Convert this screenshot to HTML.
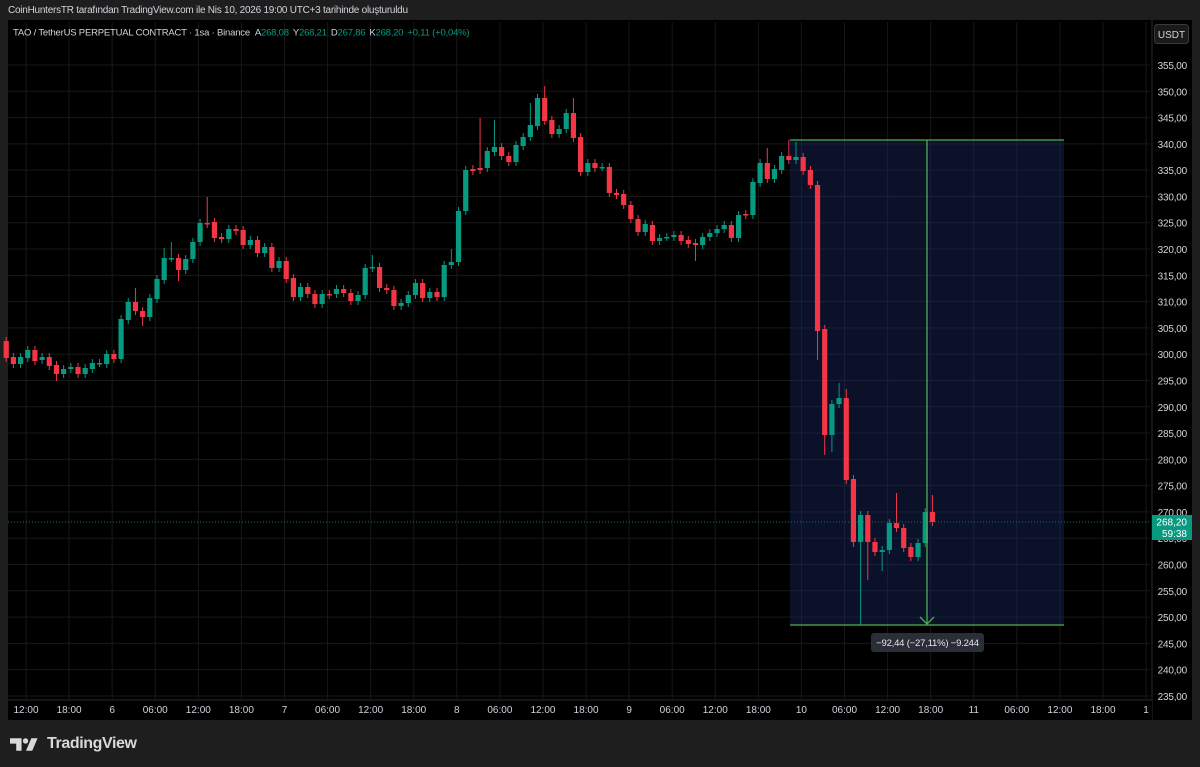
<!DOCTYPE html>
<html><head><meta charset="utf-8"><style>
html,body{margin:0;padding:0;background:#1e1e1e;width:1200px;height:767px;overflow:hidden;font-family:"Liberation Sans",sans-serif}
#hdr{position:absolute;left:8px;top:5px;font-size:10px;color:#d1d4dc;letter-spacing:-0.25px}
#chart{position:absolute;left:0;top:0}
#logo{position:absolute;left:10px;top:735px;color:#d9d9d9;font-size:16px;font-weight:bold;display:flex;align-items:center;gap:5px;letter-spacing:-0.4px}
</style></head><body>
<svg id="chart" width="1200" height="767" xmlns="http://www.w3.org/2000/svg" font-family="Liberation Sans, sans-serif"></svg>
<div id="hdr">CoinHuntersTR tarafından TradingView.com ile Nis 10, 2026 19:00 UTC+3 tarihinde oluşturuldu</div>
<div id="logo"><svg width="32" height="13" viewBox="0 0 36 14"><path d="M0 0h13v14h-6V6H0z" fill="#d9d9d9"/><circle cx="17.5" cy="3" r="3" fill="#d9d9d9"/><path d="M24 0h7l-6 14h-7z" fill="#d9d9d9"/></svg><span>TradingView</span></div>
<script>
const s=document.getElementById('chart');let h='';
const G='#089981',R='#f23645';
h+='<rect x="8" y="20" width="1184" height="700" fill="#000"/>';
for(let k=0;k<=24;k++){const y=65+k*26.29;h+=`<line x1="8" x2="1150" y1="${y}" y2="${y}" stroke="#181818"/>`;}
const tl=['12:00','18:00','6','06:00','12:00','18:00','7','06:00','12:00','18:00','8','06:00','12:00','18:00','9','06:00','12:00','18:00','10','06:00','12:00','18:00','11','06:00','12:00','18:00','1'];
tl.forEach((t,i)=>{const x=26+i*43.08;h+=`<line x1="${x}" x2="${x}" y1="22" y2="699" stroke="#181818"/>`;});
h+='<rect x="790" y="140" width="274" height="485" fill="#0a1129"/>';
for(let k=0;k<=24;k++){const y=65+k*26.29;if(y>140&&y<625)h+=`<line x1="790" x2="1064" y1="${y}" y2="${y}" stroke="#18203a"/>`;}
tl.forEach((t,i)=>{const x=26+i*43.08;if(x>790&&x<1064)h+=`<line x1="${x}" x2="${x}" y1="140" y2="625" stroke="#18203a"/>`;});
const c=[[341,358],[357,364],[364,357],[358,350],[350,361],[360,357],[357,366],[365,374,,381],[374,369],[369,367,,],[367,374],[374,368],[369,363],[363,363],[364,354],[354,359],[359,319],[320,302],[302,311,288],[311,317,,326],[317,298],[299,279],[280,258,248],[258,258,242],[258,270,,281],[270,259],[259,242],[242,223],[223,224,197],[222,238],[237,239],[239,229],[229,231],[230,245],[245,240],[240,253],[253,247],[247,268],[268,261],[261,279],[278,297],[297,287],[287,294],[294,304],[304,294],[294,295],[294,289],[289,293],[293,301],[301,295],[295,268],[268,267,255],[267,288],[288,290],[290,306],[306,303],[303,295],[295,283],[283,298],[298,292],[292,297],[297,265],[265,262,249],[262,211],[211,170],[169,171],[168,170,118],[168,151],[152,147,120],[147,156],[156,162],[162,145],[146,137],[137,125,103],[126,98],[98,121,86],[120,134],[134,129],[129,113],[113,138,98],[137,172],[172,163],[163,168],[167,167],[167,193],[193,195],[194,205],[205,219],[219,232],[232,224],[225,241],[241,238],[237,237],[237,235],[235,241],[240,244],[243,245,,261],[245,237],[237,233],[233,229],[229,225],[225,238],[238,215],[214,215],[215,182],[183,163],[163,179,148],[179,169],[170,156],[156,160,140],[160,157,142],[157,171],[170,185],[185,331,,360],[329,435,,455],[435,404,,452],[404,398,383],[398,480,389],[479,542,,547],[542,515,,625],[515,542,,580],[542,552],[552,550,,571],[550,523],[523,528,493],[528,548],[547,557],[557,543],[543,512],[512,522,495]];
c.forEach((d,i)=>{const x=6.2+i*7.18;let[o,cl,hi,lo]=d;const up=cl<=o;const col=up?G:R;const t=Math.min(o,cl),b=Math.max(o,cl);hi=hi||t-4;lo=lo||b+4;
h+=`<line x1="${x}" x2="${x}" y1="${hi}" y2="${lo}" stroke="${col}" stroke-width="1"/>`;
h+=`<rect x="${x-2.6}" y="${t}" width="5.2" height="${Math.max(b-t,1.5)}" fill="${col}"/>`;});
h+='<line x1="8" x2="1150" y1="522" y2="522" stroke="#089981" stroke-dasharray="1 2" opacity="0.8"/>';
h+='<line x1="790" x2="1064" y1="140" y2="140" stroke="#4caf50" stroke-width="1.3"/><line x1="790" x2="1064" y1="625" y2="625" stroke="#4caf50" stroke-width="1.3"/><line x1="927" x2="927" y1="140" y2="625" stroke="#4caf50" stroke-width="1.3"/><path d="M920 617L927 624L934 617" fill="none" stroke="#4caf50" stroke-width="1.3"/>';
h+='<rect x="871" y="633" width="113" height="19" rx="3" fill="#2a2e39"/><text x="927.5" y="646" fill="#e6e6e6" font-size="9.5" letter-spacing="-0.2" text-anchor="middle">−92,44 (−27,11%) −9.244</text>';
h+='<rect x="1152" y="20" width="40" height="700" fill="#000"/><line x1="1152" x2="1152" y1="20" y2="720" stroke="#2a2a2a"/>';
h+='<rect x="1154.5" y="24.5" width="34" height="19" rx="3" fill="#1a1a1a" stroke="#3a3a3a"/><text x="1171.5" y="38" fill="#d1d4dc" font-size="10" text-anchor="middle">USDT</text>';
for(let k=0;k<=24;k++){const y=65+k*26.29;const p=(355-5*k).toFixed(2).replace('.',',');h+=`<text x="1187" y="${y+4}" fill="#d1d4dc" font-size="10" letter-spacing="-0.2" text-anchor="end">${p}</text>`;}
h+='<rect x="1152" y="515" width="40" height="25" fill="#089981"/><text x="1187" y="525.5" fill="#fff" font-size="10" text-anchor="end">268,20</text><text x="1187" y="537" fill="#fff" font-size="10" text-anchor="end">59:38</text>';
h+='<rect x="8" y="700" width="1144" height="20" fill="#000"/><line x1="8" x2="1152" y1="700" y2="700" stroke="#2a2a2a"/>';
tl.forEach((t,i)=>{const x=26+i*43.08;h+=`<text x="${x}" y="713" fill="#d1d4dc" font-size="10" text-anchor="middle">${t}</text>`;});
h+='<text x="13" y="35.5" font-size="9.5" letter-spacing="-0.2" fill="#d1d4dc">TAO / TetherUS PERPETUAL CONTRACT · 1sa · Binance  <tspan dx="3">A</tspan><tspan fill="#089981">268,08</tspan><tspan dx="4">Y</tspan><tspan fill="#089981">268,21</tspan><tspan dx="4">D</tspan><tspan fill="#089981">267,86</tspan><tspan dx="4">K</tspan><tspan fill="#089981">268,20</tspan><tspan fill="#089981" dx="4">+0,11 (+0,04%)</tspan></text>';
s.innerHTML=h;
</script>
</body></html>
